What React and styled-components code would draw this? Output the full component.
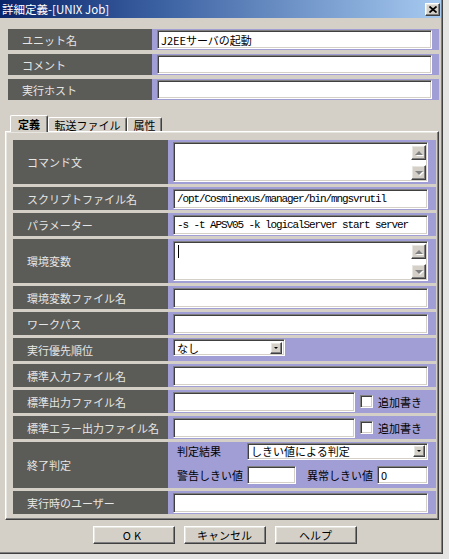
import React from 'react';
import styled, { createGlobalStyle, css } from 'styled-components';

const GlobalStyle = createGlobalStyle`
  html, body {
    margin: 0;
    padding: 0;
    background: #e4e4e2;
  }
  body {
    font-family: "Noto Sans CJK JP", "Noto Sans", sans-serif;
    font-size: 11px;
  }
  * {
    box-sizing: border-box;
  }
`;

const sunken = css`
  border: 1px solid;
  border-color: #808080 #ffffff #ffffff #808080;
  box-shadow: inset 1px 1px 0 #404040, inset -1px -1px 0 #d4d0c8;
`;

const raised = css`
  border: 1px solid;
  border-color: #ffffff #404040 #404040 #ffffff;
  box-shadow: inset -1px -1px 0 #808080, inset 1px 1px 0 #e8e6e0;
  background: #d4d0c8;
`;

const Window = styled.div`
  width: 443px;
  height: 554px;
  background: #d4d0c8;
  border-right: 1px solid #404040;
  border-bottom: 1px solid #404040;
  box-shadow: inset -1px -1px 0 #808080;
  display: flex;
  flex-direction: column;
`;

const TitleBar = styled.div`
  height: 18px;
  margin-right: 1px;
  padding: 0 1px 0 2px;
  display: flex;
  align-items: center;
  justify-content: space-between;
  background: linear-gradient(to right, #0a246a, #3a5fa0 35%, #a6caf0);
`;

const Title = styled.span`
  color: #ffffff;
  font-size: 11.5px;
  line-height: 18px;
`;

const CloseButton = styled.div`
  ${raised};
  width: 15px;
  height: 13px;
  display: flex;
  align-items: center;
  justify-content: center;
`;

const Body = styled.div`
  flex: 1;
  display: flex;
  flex-direction: column;
  padding: 11px 3px 8px 5px;
`;

const FieldTable = styled.div`
  display: flex;
  flex-direction: column;
  gap: ${p => p.$gap}px;
  width: ${p => p.$w}px;
  margin-left: ${p => p.$ml || 0}px;
`;

const FieldRow = styled.div`
  display: flex;
  height: ${p => p.$h}px;
`;

const LabelCell = styled.div`
  width: ${p => p.$w}px;
  flex-shrink: 0;
  background: #5b5b58;
  color: #e6e6e4;
  padding-left: 14px;
  display: flex;
  align-items: center;
  white-space: nowrap;
`;

const ValueCell = styled.div`
  flex: 1;
  min-width: 0;
  background: #a09ed4;
  padding: ${p => p.$pad};
  display: flex;
  align-items: center;
`;

const Field = styled.div`
  ${sunken};
  flex: ${p => (p.$w ? '0 0 auto' : 1)};
  width: ${p => (p.$w ? `${p.$w}px` : 'auto')};
  height: ${p => p.$h || 20}px;
  background: #ffffff;
  color: #000000;
  padding: 0 3px;
  display: flex;
  align-items: center;
  white-space: nowrap;
  overflow: hidden;
`;

const MonoText = styled.span`
  font-family: "Liberation Mono", monospace;
  font-size: 11px;
  letter-spacing: -1.1px;
`;

const TextArea = styled.div`
  ${sunken};
  flex: 1;
  height: ${p => p.$h}px;
  background: #ffffff;
  display: flex;
  padding: 2px 1px 1px 2px;
`;

const TextBody = styled.div`
  flex: 1;
`;

const Caret = styled.div`
  width: 1px;
  height: 13px;
  background: #000000;
  margin: 1px 0 0 2px;
`;

const ScrollColumn = styled.div`
  width: 15px;
  display: flex;
  flex-direction: column;
  justify-content: space-between;
`;

const ScrollButton = styled.div`
  ${raised};
  width: 15px;
  height: 15px;
  display: flex;
  align-items: center;
  justify-content: center;
`;

const Arrow = styled.div`
  width: 0;
  height: 0;
  border-left: ${p => p.$size}px solid transparent;
  border-right: ${p => p.$size}px solid transparent;
  ${p =>
    p.$dir === 'up'
      ? `border-bottom: ${p.$size}px solid ${p.$color};`
      : `border-top: ${p.$size}px solid ${p.$color};`}
  filter: ${p => (p.$disabled ? 'drop-shadow(1px 1px 0 #ffffff)' : 'none')};
`;

const Select = styled.div`
  ${sunken};
  flex: ${p => (p.$w ? '0 0 auto' : 1)};
  width: ${p => (p.$w ? `${p.$w}px` : 'auto')};
  height: 17px;
  background: #ffffff;
  display: flex;
  align-items: center;
  padding: 0 2px 0 3px;
  align-self: ${p => p.$self || 'center'};
  margin-top: ${p => p.$mt || 0}px;
`;

const SelectText = styled.span`
  flex: 1;
  white-space: nowrap;
`;

const DropButton = styled.div`
  ${raised};
  width: 12px;
  height: 12px;
  display: flex;
  align-items: center;
  justify-content: center;
`;

const CheckBox = styled.div`
  ${sunken};
  width: 13px;
  height: 13px;
  background: #ffffff;
  margin-left: 5px;
  flex-shrink: 0;
`;

const AppendLabel = styled.span`
  width: 50px;
  margin-left: 5px;
  color: #000000;
  white-space: nowrap;
`;

const JudgeCell = styled(ValueCell)`
  flex-direction: column;
  align-items: stretch;
  justify-content: flex-start;
  gap: 7px;
`;

const JudgeLine = styled.div`
  display: flex;
  align-items: center;
  height: ${p => p.$h}px;
`;

const JudgeLabel = styled.span`
  width: 70px;
  flex-shrink: 0;
  margin-left: ${p => p.$ml || 0}px;
  color: #000000;
  white-space: nowrap;
`;

const TabStrip = styled.div`
  margin-top: 15px;
  height: 16px;
  display: flex;
  align-items: flex-end;
  padding-left: 5px;
`;

const Tab = styled.div`
  width: ${p => p.$w}px;
  height: ${p => (p.$active ? 17 : 14)}px;
  margin-bottom: ${p => (p.$active ? -1 : 0)}px;
  position: relative;
  z-index: ${p => (p.$active ? 1 : 0)};
  background: #d4d0c8;
  border-top: 1px solid #ffffff;
  border-left: 1px solid #ffffff;
  border-right: 1px solid #404040;
  box-shadow: inset -1px 0 0 #808080;
  border-radius: 2px 2px 0 0;
  display: flex;
  align-items: center;
  justify-content: center;
  font-weight: ${p => (p.$active ? 700 : 400)};
  color: #000000;
  white-space: nowrap;
`;

const TabPanel = styled.div`
  width: 434px;
  height: 389px;
  border: 1px solid;
  border-color: #ffffff #404040 #404040 #ffffff;
  box-shadow: inset -1px -1px 0 #808080, inset 1px 1px 0 #e8e6e0;
  padding: 8px 2px 5px 7px;
`;

const ButtonBar = styled.div`
  margin-top: 6px;
  padding-left: 5px;
  display: flex;
  justify-content: center;
  gap: 9px;
`;

const Button = styled.div`
  ${raised};
  width: 82px;
  height: 18px;
  display: flex;
  align-items: center;
  justify-content: center;
  color: #000000;
  letter-spacing: ${p => p.$spacing || 0}px;
`;

const CloseIcon = () => (
  <svg width="8" height="7" viewBox="0 0 8 7">
    <path d="M0.5 0.5L7.5 6.5M7.5 0.5L0.5 6.5" stroke="#000" strokeWidth="1.7" />
  </svg>
);

const Scroll = () => (
  <ScrollColumn>
    <ScrollButton>
      <Arrow $dir="up" $size={4} $color="#808080" $disabled />
    </ScrollButton>
    <ScrollButton>
      <Arrow $dir="down" $size={4} $color="#808080" $disabled />
    </ScrollButton>
  </ScrollColumn>
);

const Drop = () => (
  <DropButton>
    <Arrow $dir="down" $size={2} $color="#000" />
  </DropButton>
);

const PANEL_LABEL = 155;
const PANEL_PAD = '0 8px 0 5px';

const PanelRow = ({ label, h = 23, children, pad = PANEL_PAD }) => (
  <FieldRow $h={h}>
    <LabelCell $w={PANEL_LABEL}>{label}</LabelCell>
    <ValueCell $pad={pad}>{children}</ValueCell>
  </FieldRow>
);

const AppendCheck = () => (
  <>
    <CheckBox />
    <AppendLabel>追加書き</AppendLabel>
  </>
);

export default function App() {
  return (
    <>
      <GlobalStyle />
      <Window>
        <TitleBar>
          <Title>詳細定義-[UNIX Job]</Title>
          <CloseButton>
            <CloseIcon />
          </CloseButton>
        </TitleBar>

        <Body>
          <FieldTable $gap={4} $w={431} $ml={3}>
            <FieldRow $h={21}>
              <LabelCell $w={144}>ユニット名</LabelCell>
              <ValueCell $pad="0 7px 0 5px">
                <Field $h={19}>J2EEサーバの起動</Field>
              </ValueCell>
            </FieldRow>
            <FieldRow $h={21}>
              <LabelCell $w={144}>コメント</LabelCell>
              <ValueCell $pad="0 7px 0 5px">
                <Field $h={19} />
              </ValueCell>
            </FieldRow>
            <FieldRow $h={21}>
              <LabelCell $w={144}>実行ホスト</LabelCell>
              <ValueCell $pad="0 7px 0 5px">
                <Field $h={19} />
              </ValueCell>
            </FieldRow>
          </FieldTable>

          <TabStrip>
            <Tab $w={38} $active>定義</Tab>
            <Tab $w={79}>転送ファイル</Tab>
            <Tab $w={35}>属性</Tab>
          </TabStrip>

          <TabPanel>
            <FieldTable $gap={3}>
              <PanelRow label="コマンド文" h={44}>
                <TextArea $h={40}>
                  <TextBody />
                  <Scroll />
                </TextArea>
              </PanelRow>
              <PanelRow label="スクリプトファイル名">
                <Field>
                  <MonoText>/opt/Cosminexus/manager/bin/mngsvrutil</MonoText>
                </Field>
              </PanelRow>
              <PanelRow label="パラメーター">
                <Field>
                  <MonoText>-s -t APSV05 -k logicalServer start server</MonoText>
                </Field>
              </PanelRow>
              <PanelRow label="環境変数" h={44}>
                <TextArea $h={40}>
                  <TextBody>
                    <Caret />
                  </TextBody>
                  <Scroll />
                </TextArea>
              </PanelRow>
              <PanelRow label="環境変数ファイル名">
                <Field />
              </PanelRow>
              <PanelRow label="ワークパス">
                <Field />
              </PanelRow>
              <PanelRow label="実行優先順位">
                <Select $w={112} $self="flex-start" $mt={1}>
                  <SelectText>なし</SelectText>
                  <Drop />
                </Select>
              </PanelRow>
              <PanelRow label="標準入力ファイル名">
                <Field />
              </PanelRow>
              <PanelRow label="標準出力ファイル名">
                <Field />
                <AppendCheck />
              </PanelRow>
              <PanelRow label="標準エラー出力ファイル名">
                <Field />
                <AppendCheck />
              </PanelRow>
              <FieldRow $h={46}>
                <LabelCell $w={PANEL_LABEL}>終了判定</LabelCell>
                <JudgeCell $pad="1px 8px 0 9px">
                  <JudgeLine $h={16}>
                    <JudgeLabel>判定結果</JudgeLabel>
                    <Select>
                      <SelectText>しきい値による判定</SelectText>
                      <Drop />
                    </Select>
                  </JudgeLine>
                  <JudgeLine $h={18}>
                    <JudgeLabel>警告しきい値</JudgeLabel>
                    <Field $w={49} $h={18} />
                    <JudgeLabel $ml={11}>異常しきい値</JudgeLabel>
                    <Field $h={18}>0</Field>
                  </JudgeLine>
                </JudgeCell>
              </FieldRow>
              <PanelRow label="実行時のユーザー">
                <Field />
              </PanelRow>
            </FieldTable>
          </TabPanel>

          <ButtonBar>
            <Button $spacing={3}>OK</Button>
            <Button>キャンセル</Button>
            <Button>ヘルプ</Button>
          </ButtonBar>
        </Body>
      </Window>
    </>
  );
}
